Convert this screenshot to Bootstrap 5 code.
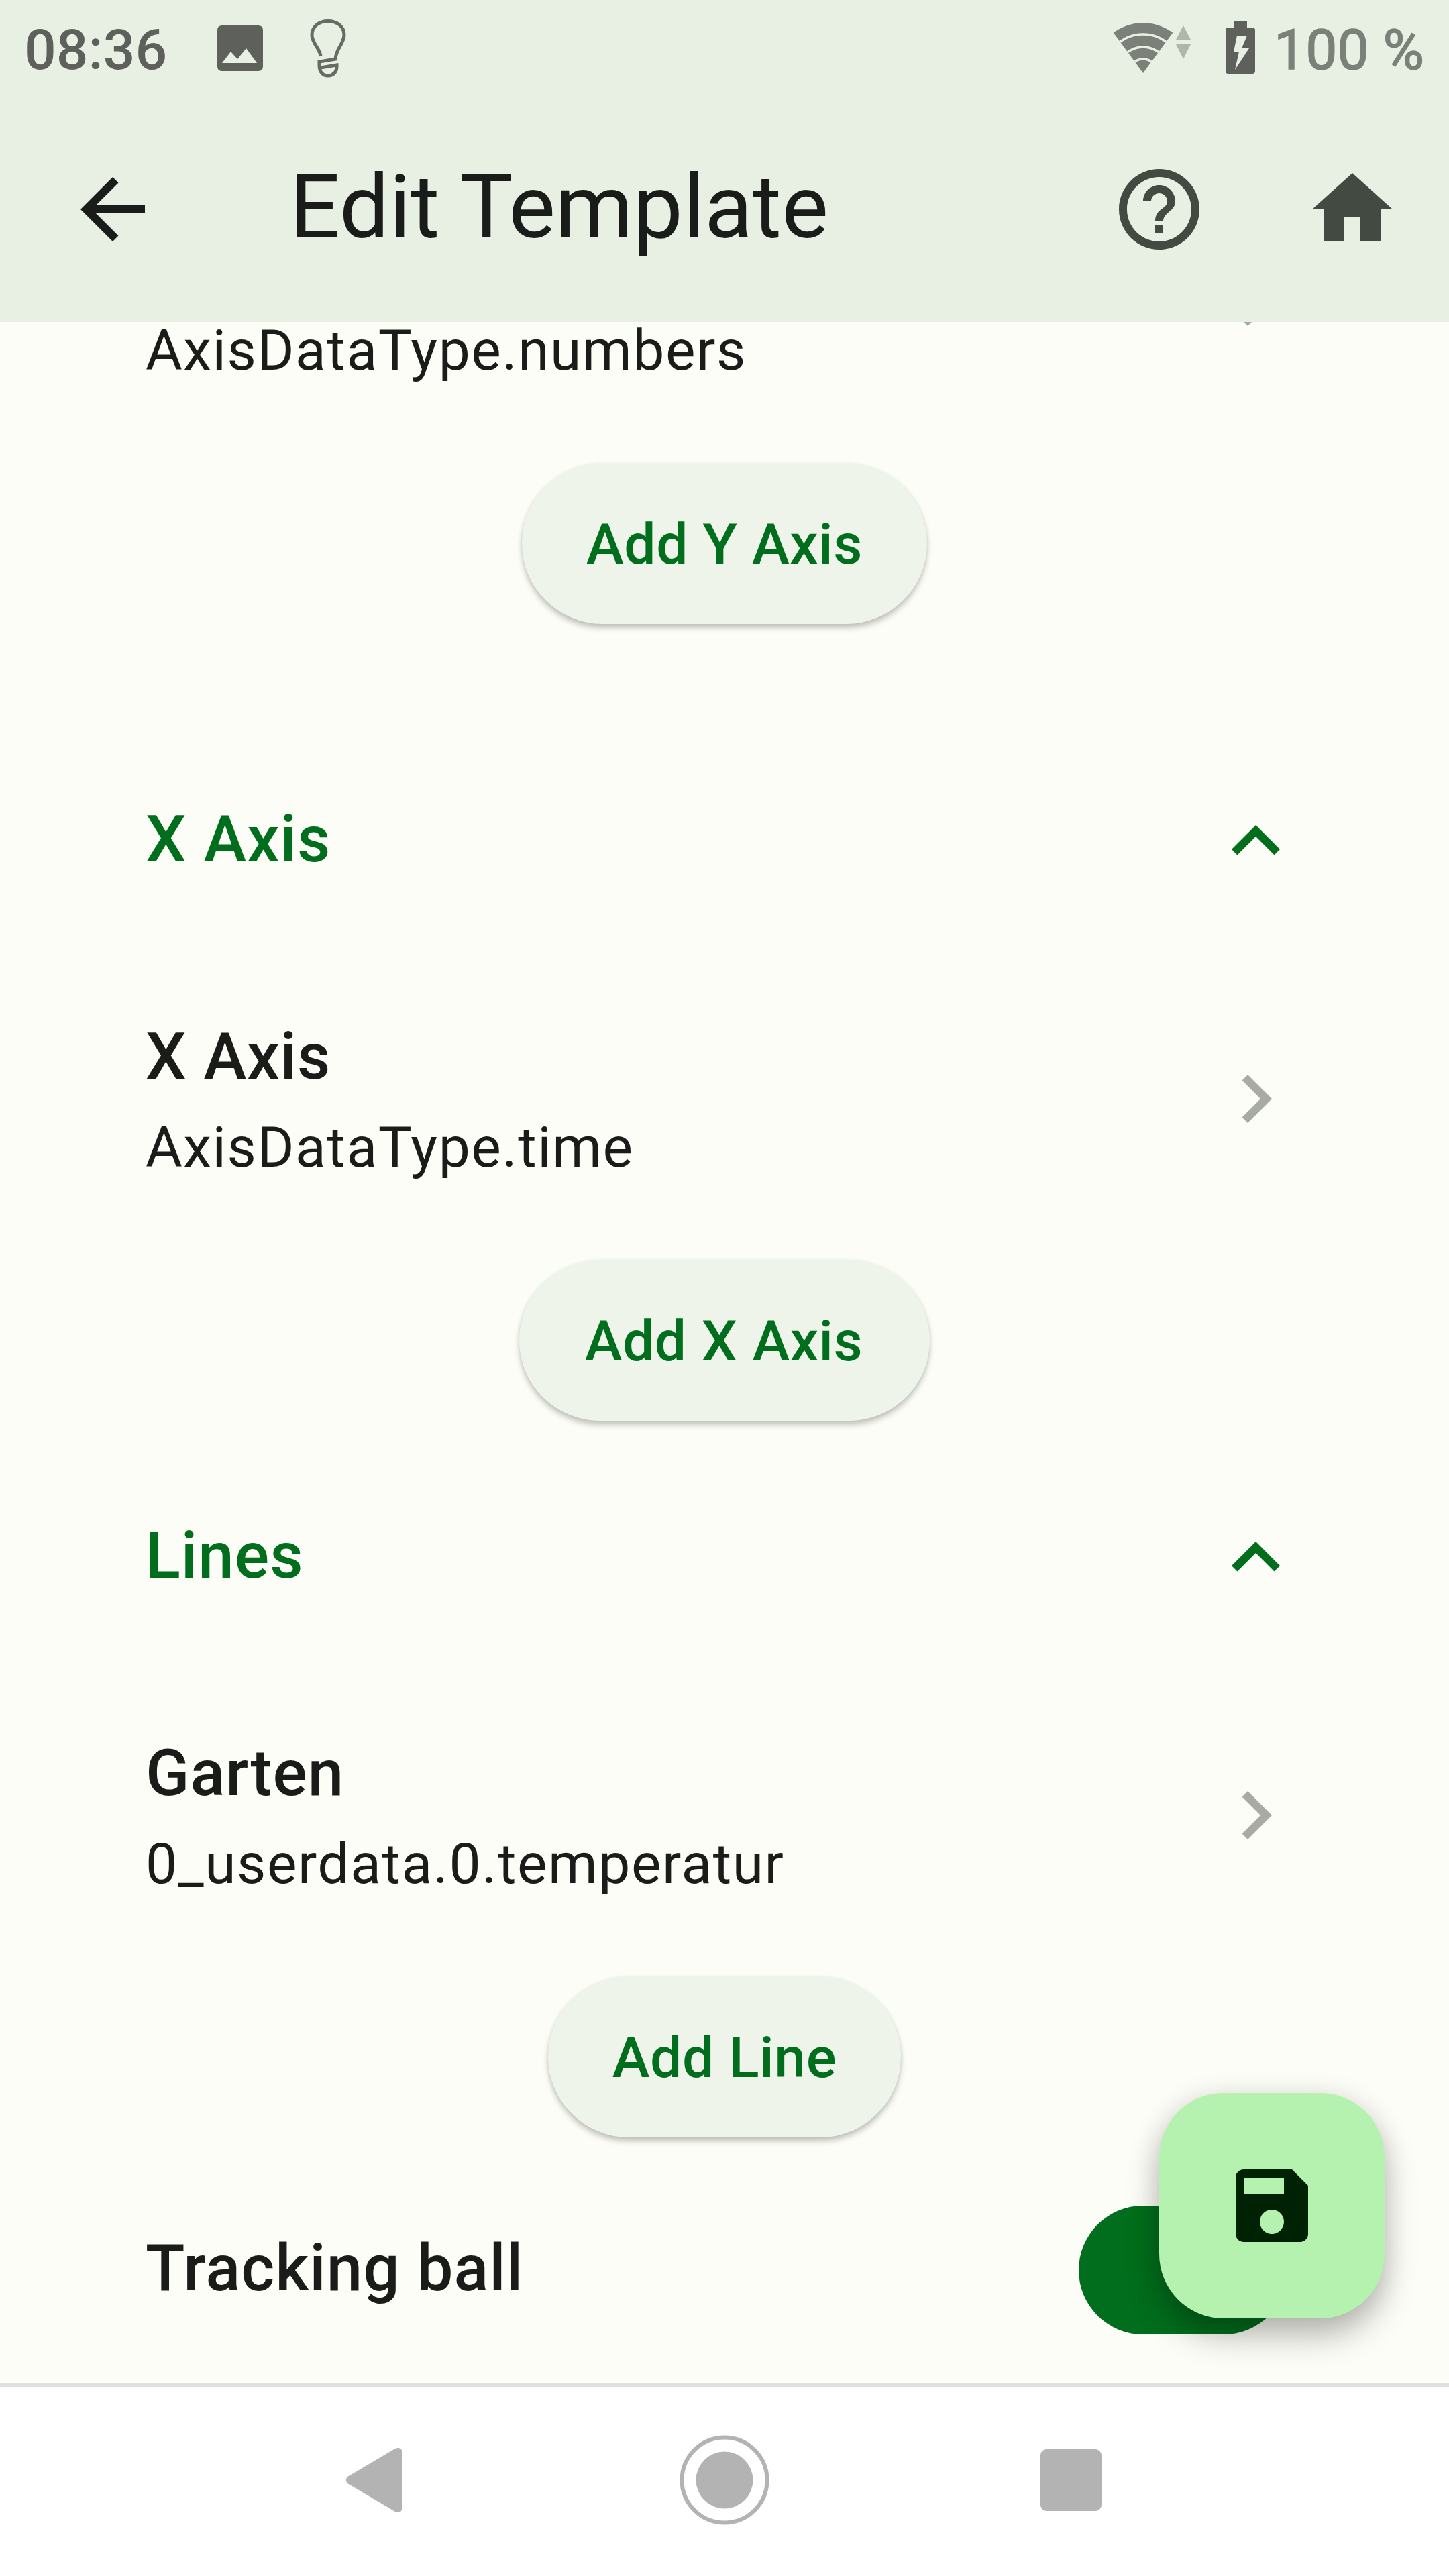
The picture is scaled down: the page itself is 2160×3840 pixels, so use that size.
<!DOCTYPE html>
<html lang="en">
<head>
<meta charset="utf-8">
<meta name="viewport" content="width=device-width, initial-scale=1">
<title>Edit Template</title>
<link href="https://cdn.jsdelivr.net/npm/bootstrap@5.3.0/dist/css/bootstrap.min.css" rel="stylesheet">
<style>
  body { font-family: Roboto, "Liberation Sans", sans-serif; background: #fcfdf6; color: #1a1c19; width: 2160px; height: 3840px; }
  svg { display: block; flex: none; }
  .ico { width: 144px; height: 144px; fill: currentColor; }
  .top-area { background: #e8f0e4; height: 480px; z-index: 2; }
  .status-bar { height: 144px; font-size: 84px; line-height: 138px; color: #5e605b; padding: 0 37px 0 36px; font-weight: 500; }
  .status-bar span { padding-top: 6px; }
  .photo-ico { margin-left: 74px; }
  .bulb-ico { margin-left: 69px; }
  .wifi-ico { margin-top: -5px; }
  .battery-ico { margin: -2px 28px 0 51px; }
  .status-right { color: #7b8079; }
  .battery-text { font-weight: 400; -webkit-text-stroke: 1.5px #7b8079; }
  .app-bar { height: 336px; padding-left: 96px; }
  .app-title { font-size: 132px; line-height: 156px; margin: -6px 0 0 192px; font-weight: 400; }
  .act { width: 288px; color: #434a41; }
  .content-area { padding: 0 216px; }
  .scroll-body { margin-top: -21px; }
  .tile { height: 272px; }
  .tile.tile-first { height: 128px; }
  .tile-title { font-size: 96px; line-height: 144px; font-weight: 500; letter-spacing: 1px; padding-left: 1px; }
  .tile-sub { font-size: 84px; line-height: 128px; letter-spacing: 1.55px; padding-left: 1px; }
  .tile .ico { color: #a8aaa4; margin-top: 63px; }
  .tile-first .ico { margin-top: -81px; }
  .section-head { height: 144px; color: #006e1c; }
  .section-head .tile-title { line-height: 138px; }
  .head-gap { margin-top: 149px; }
  .head-gap-sm { margin-top: 29px; }
  .tile-gap { margin-top: 177px; }
  .btn-pill { height: 240px; border-radius: 120px; border: 0; background: #eff4eb; color: #006e1c; font-size: 84px; font-weight: 500; letter-spacing: .6px; line-height: 120px; padding: 3px 96px 0; margin: 103px 0; box-shadow: 0 6px 9px rgba(0,0,0,.22), 0 1px 5px rgba(0,0,0,.06); }
  .btn-wide { padding: 3px 100px 0 98px; word-spacing: .5px; }
  .track-row { margin-top: 102px; }
  .track-row .tile-title { line-height: 186px; }
  .toggle { width: 312px; height: 192px; border-radius: 96px; background: #006e1c; margin-right: 24px; }
  .fab { right: 96px; bottom: 96px; width: 336px; height: 336px; border-radius: 96px; background: #b5f2b0; color: #002204; box-shadow: 0 26px 48px rgba(0,0,0,.27), 0 0 40px rgba(0,0,0,.08); }
  .nav-strip { height: 288px; background: #fff; border-top: 1px solid #a8a8a8; box-shadow: inset 0 5px 0 #e0e0e0; padding: 0 518px 0 515px; z-index: 2; }
  .home-key { margin-left: 9px; }
</style>
</head>
<body class="d-flex flex-column overflow-hidden">
  <header class="top-area flex-shrink-0 position-relative">
    <div class="status-bar d-flex align-items-center">
      <span>08:36</span>
      <svg class="photo-ico" width="70" height="70" viewBox="0 0 70 70" fill="#5e605b"><path fill-rule="evenodd" d="M8 1H62Q69 1 69 8V62Q69 69 62 69H8Q1 69 1 62V8Q1 1 8 1ZM8 57H60L44 35L31 51L21 40Z"/></svg>
      <svg class="bulb-ico" width="54" height="88" viewBox="0 0 54 88" fill="none" stroke="#686b65" stroke-width="5"><path d="M16 56C15 44 3 37 3 24C3 11 14 3.500 27 3.500S51 11 51 24C51 37 39 44 38 60L14 64V70C14 80 20 85 27 85S40 80 40 71V69L16 73"/></svg>
      <div class="status-right d-flex align-items-center ms-auto">
        <svg class="wifi-ico" width="118" height="80" viewBox="0 0 118 80">
          <defs><clipPath id="fan"><path d="M-1 15L46 79L93 15V0H-1Z"/></clipPath></defs>
          <g clip-path="url(#fan)"><circle cx="46" cy="78" r="74" fill="#7b8079"/><g fill="none" stroke="#e8f0e4" stroke-width="3.500"><circle cx="46" cy="78" r="57"/><circle cx="46" cy="78" r="38"/><circle cx="46" cy="78" r="20"/></g></g>
          <path fill="#afb7ac" d="M95 29H117L106 8ZM95 36H117L106 58Z"/>
        </svg>
        <svg class="battery-ico" width="44" height="80" viewBox="0 0 44 80" fill="#5e605b"><path fill-rule="evenodd" d="M12 1H32V10H40Q44 10 44 14V75Q44 79 40 79H4Q0 79 0 75V14Q0 10 4 10H12ZM17 22H32L24 41H35L14 73L20 46H12Z"/></svg>
        <span class="battery-text">100 %</span>
      </div>
    </div>
    <nav class="app-bar d-flex align-items-center">
      <svg class="ico" viewBox="0 0 24 24"><path d="M20 11H7.830l5.590-5.590L12 4l-8 8 8 8 1.410-1.410L7.830 13H20v-2z"/></svg>
      <h1 class="app-title">Edit Template</h1>
      <div class="d-flex ms-auto">
        <div class="act d-flex justify-content-center"><svg class="ico" viewBox="0 0 24 24"><path d="M11 18h2v-2h-2v2zm1-16C6.480 2 2 6.480 2 12s4.480 10 10 10 10-4.480 10-10S17.520 2 12 2zm0 18c-4.410 0-8-3.590-8-8s3.590-8 8-8 8 3.590 8 8-3.590 8-8 8zm0-14c-2.210 0-4 1.790-4 4h2c0-1.100.9-2 2-2s2 .9 2 2c0 2-3 1.750-3 5h2c0-2.250 3-2.500 3-5 0-2.210-1.790-4-4-4z"/></svg></div>
        <div class="act d-flex justify-content-center"><svg class="ico" viewBox="0 0 24 24"><path d="M10 20v-6h4v6h5v-8h3L12 3 2 12h3v8z"/></svg></div>
      </div>
    </nav>
  </header>

  <main class="content-area flex-grow-1 overflow-hidden position-relative">
    <div class="scroll-body d-flex flex-column">
      <div class="tile tile-first d-flex justify-content-between align-items-start">
        <div class="tile-sub">AxisDataType.numbers</div>
        <svg class="ico" viewBox="0 0 24 24"><path d="M10 6L8.590 7.410 13.170 12l-4.580 4.590L10 18l6-6z"/></svg>
      </div>
      <button class="btn btn-pill align-self-center">Add Y Axis</button>
      <div class="section-head head-gap d-flex justify-content-between align-items-start">
        <div class="tile-title">X Axis</div>
        <svg class="ico" viewBox="0 0 24 24"><path d="M12 8l-6 6 1.410 1.410L12 10.830l4.590 4.580L18 14z"/></svg>
      </div>
      <div class="tile tile-gap d-flex justify-content-between align-items-start">
        <div><div class="tile-title">X Axis</div><div class="tile-sub">AxisDataType.time</div></div>
        <svg class="ico" viewBox="0 0 24 24"><path d="M10 6L8.590 7.410 13.170 12l-4.580 4.590L10 18l6-6z"/></svg>
      </div>
      <button class="btn btn-pill btn-wide align-self-center">Add X Axis</button>
      <div class="section-head head-gap-sm d-flex justify-content-between align-items-start">
        <div class="tile-title">Lines</div>
        <svg class="ico" viewBox="0 0 24 24"><path d="M12 8l-6 6 1.410 1.410L12 10.830l4.590 4.580L18 14z"/></svg>
      </div>
      <div class="tile tile-gap d-flex justify-content-between align-items-start">
        <div><div class="tile-title">Garten</div><div class="tile-sub">0_userdata.0.temperatur</div></div>
        <svg class="ico" viewBox="0 0 24 24"><path d="M10 6L8.590 7.410 13.170 12l-4.580 4.590L10 18l6-6z"/></svg>
      </div>
      <button class="btn btn-pill align-self-center mb-0">Add Line</button>
      <div class="track-row d-flex justify-content-between align-items-start">
        <div class="tile-title">Tracking ball</div>
        <div class="toggle"></div>
      </div>
    </div>
    <button class="fab btn border-0 p-0 position-absolute d-flex align-items-center justify-content-center"><svg class="ico" viewBox="0 0 24 24"><path d="M17 3H5c-1.110 0-2 .9-2 2v14c0 1.100.890 2 2 2h14c1.100 0 2-.9 2-2V7l-4-4zm-5 16c-1.660 0-3-1.340-3-3s1.340-3 3-3 3 1.340 3 3-1.340 3-3 3zm3-10H5V5h10v4z"/></svg></button>
  </main>

  <footer class="nav-strip flex-shrink-0 d-flex justify-content-between align-items-center">
    <svg width="85" height="98" viewBox="0 0 85 98" fill="#b3b3b3"><path d="M3 44L74 2Q84-2 85 9V89Q84 100 74 96L3 54Q-1 49 3 44Z"/></svg>
    <svg class="home-key" width="134" height="134" viewBox="0 0 134 134"><circle cx="67" cy="67" r="63.500" fill="none" stroke="#b3b3b3" stroke-width="6"/><circle cx="67" cy="67" r="42.500" fill="#b3b3b3"/></svg>
    <svg width="91" height="92" viewBox="0 0 91 92"><rect width="91" height="92" rx="9" fill="#b3b3b3"/></svg>
  </footer>
<script src="https://cdn.jsdelivr.net/npm/bootstrap@5.3.0/dist/js/bootstrap.bundle.min.js"></script>
</body>
</html>
